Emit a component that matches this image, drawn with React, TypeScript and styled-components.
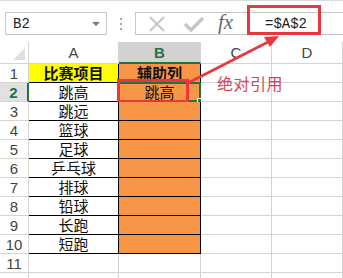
import React from "react";
import styled, {createGlobalStyle} from "styled-components";

const GlobalStyle = createGlobalStyle`
  html, body {
    margin: 0;
    padding: 0;
    background: #ffffff;
  }
`

const GRID = "#d4d4d4"
const GREEN = "#217346"
const RED = "#e8383d"
const MONO = `"Liberation Mono", "DejaVu Sans Mono", "Courier New", monospace`

const items = ["跳高", "跳远", "篮球", "足球", "乒乓球", "排球", "铅球", "长跑", "短跑"]
const columns = ["A", "B", "C", "D"]

const App = () => {
    return <Page>
        <GlobalStyle/>
        <Toolbar>
            <NameBox>
                <span>B2</span>
                <DropArrow/>
            </NameBox>
            <Dots>
                <i/><i/><i/>
            </Dots>
            <FormulaBox>
                <IconSlot>
                    <svg width="18" height="18" viewBox="0 0 18 18">
                        <path d="M2 2 L16 16 M16 2 L2 16" stroke="#c6c6c6" strokeWidth="2.2"/>
                    </svg>
                </IconSlot>
                <IconSlot>
                    <svg width="22" height="18" viewBox="0 0 22 18">
                        <path d="M2 9 L8 15 L20 3" stroke="#c6c6c6" strokeWidth="3.6" fill="none"/>
                    </svg>
                </IconSlot>
                <Fx>fx</Fx>
                <FormulaText>=$A$2</FormulaText>
                <FormulaMark/>
            </FormulaBox>
        </Toolbar>
        <Sheet>
            <Corner><CornerTriangle/></Corner>
            {columns.map(c => <ColHeader key={c} selected={c === "B"}>{c}</ColHeader>)}

            <RowHeader>1</RowHeader>
            <Cell fill="#ffff00" bold boxed>比赛项目</Cell>
            <Cell fill="#f79646" bold boxed>辅助列</Cell>
            <Cell/>
            <Cell/>

            {items.map((item, i) => {
                const row = i + 2
                return <React.Fragment key={row}>
                    <RowHeader selected={row === 2}>{row}</RowHeader>
                    <Cell boxed>{item}</Cell>
                    <Cell fill="#f79646" boxed>
                        {row === 2 && <>
                            跳高
                            <Selection><FillHandle/></Selection>
                            <RedFrame/>
                        </>}
                    </Cell>
                    <Cell/>
                    <Cell/>
                </React.Fragment>
            })}

            {[11, 12].map(row => <React.Fragment key={row}>
                <RowHeader>{row}</RowHeader>
                <Cell/><Cell/><Cell/><Cell/>
            </React.Fragment>)}
        </Sheet>
        <Arrow width="343" height="278" viewBox="0 0 343 278">
            <line x1="186" y1="83" x2="270" y2="40" stroke={RED} strokeWidth="2.6"/>
            <polygon points="279,35 264,36 270,46" fill={RED}/>
        </Arrow>
        <Note>绝对引用</Note>
    </Page>
}

export default App

const Page = styled.div`
  position: relative;
  width: 343px;
  height: 278px;
  overflow: hidden;
  border-top: 1px solid #dadada;
  box-sizing: border-box;
  font-family: "Liberation Sans", Arial, sans-serif;
`

const Toolbar = styled.div`
  display: flex;
  align-items: flex-start;
  height: 41px;
  padding: 11px 0 0 5px;
  box-sizing: border-box;
`

const NameBox = styled.div`
  width: 102px;
  height: 23px;
  box-sizing: border-box;
  border: 1px solid #c6c6c6;
  display: flex;
  align-items: center;
  justify-content: space-between;
  padding: 0 6px 0 7px;
  font-family: ${MONO};
  font-size: 14px;
  color: #222;
`

const DropArrow = styled.div`
  width: 0;
  height: 0;
  border-left: 4px solid transparent;
  border-right: 4px solid transparent;
  border-top: 4px solid #7a7a7a;
`

const Dots = styled.div`
  width: 28px;
  height: 23px;
  display: flex;
  flex-direction: column;
  align-items: center;
  justify-content: center;
  gap: 3px;

  i {
    display: block;
    width: 2px;
    height: 2px;
    background: #a8a8a8;
  }
`

const FormulaBox = styled.div`
  position: relative;
  flex: 1;
  height: 23px;
  box-sizing: border-box;
  border: 1px solid #c6c6c6;
  border-right: none;
  display: flex;
  align-items: center;
  padding-left: 12px;
`

const IconSlot = styled.div`
  width: 35px;
  display: flex;
  align-items: center;
  svg {
    display: block;
  }
`

const Fx = styled.div`
  width: 47px;
  font-family: "Liberation Serif", serif;
  font-style: italic;
  font-size: 21px;
  color: #6a6a6a;
  line-height: 1;
  margin-top: -2px;
`

const FormulaText = styled.div`
  font-family: ${MONO};
  font-size: 14px;
  color: #222;
`

const FormulaMark = styled.div`
  position: absolute;
  left: 111px;
  top: -8px;
  width: 74px;
  height: 30px;
  box-sizing: border-box;
  border: 3px solid ${RED};
`

const Sheet = styled.div`
  display: grid;
  grid-template-columns: 29px 90px 82px 71px 71px;
  grid-template-rows: 22px repeat(12, 19px);
`

const Corner = styled.div`
  position: relative;
  border-right: 1px solid ${GRID};
  border-bottom: 1px solid ${GRID};
`

const CornerTriangle = styled.div`
  position: absolute;
  right: 3px;
  bottom: 3px;
  width: 0;
  height: 0;
  border-left: 12px solid transparent;
  border-bottom: 12px solid #dfdfdf;
`

const ColHeader = styled.div<{ selected?: boolean }>`
  display: flex;
  align-items: center;
  justify-content: center;
  box-sizing: border-box;
  border-right: 1px solid ${GRID};
  border-bottom: ${p => p.selected ? `2px solid ${GREEN}` : `1px solid ${GRID}`};
  background: ${p => p.selected ? "#d2d2d2" : "#ffffff"};
  color: ${p => p.selected ? GREEN : "#444"};
  font-weight: ${p => p.selected ? "bold" : "normal"};
  font-size: 15px;
`

const RowHeader = styled.div<{ selected?: boolean }>`
  display: flex;
  align-items: center;
  justify-content: center;
  box-sizing: border-box;
  border-right: ${p => p.selected ? `2px solid ${GREEN}` : `1px solid ${GRID}`};
  border-bottom: 1px solid ${GRID};
  background: ${p => p.selected ? "#e1e1e1" : "#ffffff"};
  color: ${p => p.selected ? GREEN : "#444"};
  font-weight: ${p => p.selected ? "bold" : "normal"};
  font-size: 15px;
`

const Cell = styled.div<{ fill?: string, bold?: boolean, boxed?: boolean }>`
  position: relative;
  display: flex;
  align-items: center;
  justify-content: center;
  box-sizing: border-box;
  border-right: 1px solid ${p => p.boxed ? "#000" : GRID};
  border-bottom: 1px solid ${p => p.boxed ? "#000" : GRID};
  background: ${p => p.fill ?? "#ffffff"};
  font-family: "Noto Sans CJK SC", sans-serif;
  font-size: 15px;
  line-height: 18px;
  font-weight: ${p => p.bold ? "bold" : "normal"};
  color: #111;
  white-space: nowrap;
`

const Selection = styled.div`
  position: absolute;
  left: -1px;
  top: -1px;
  right: -1px;
  bottom: -1px;
  border: 2px solid ${GREEN};
`

const FillHandle = styled.div`
  position: absolute;
  right: -5px;
  bottom: -5px;
  width: 5px;
  height: 5px;
  background: ${GREEN};
  border: 1px solid #ffffff;
`

const RedFrame = styled.div`
  position: absolute;
  left: -2px;
  top: -4px;
  width: 72px;
  height: 24px;
  box-sizing: border-box;
  border: 3px solid ${RED};
`

const Arrow = styled.svg`
  position: absolute;
  left: 0;
  top: 0;
  pointer-events: none;
`

const Note = styled.div`
  position: absolute;
  left: 217px;
  top: 70px;
  font-family: "Noto Sans CJK SC", sans-serif;
  font-size: 16px;
  color: #d9435a;
  letter-spacing: 0.5px;
`
